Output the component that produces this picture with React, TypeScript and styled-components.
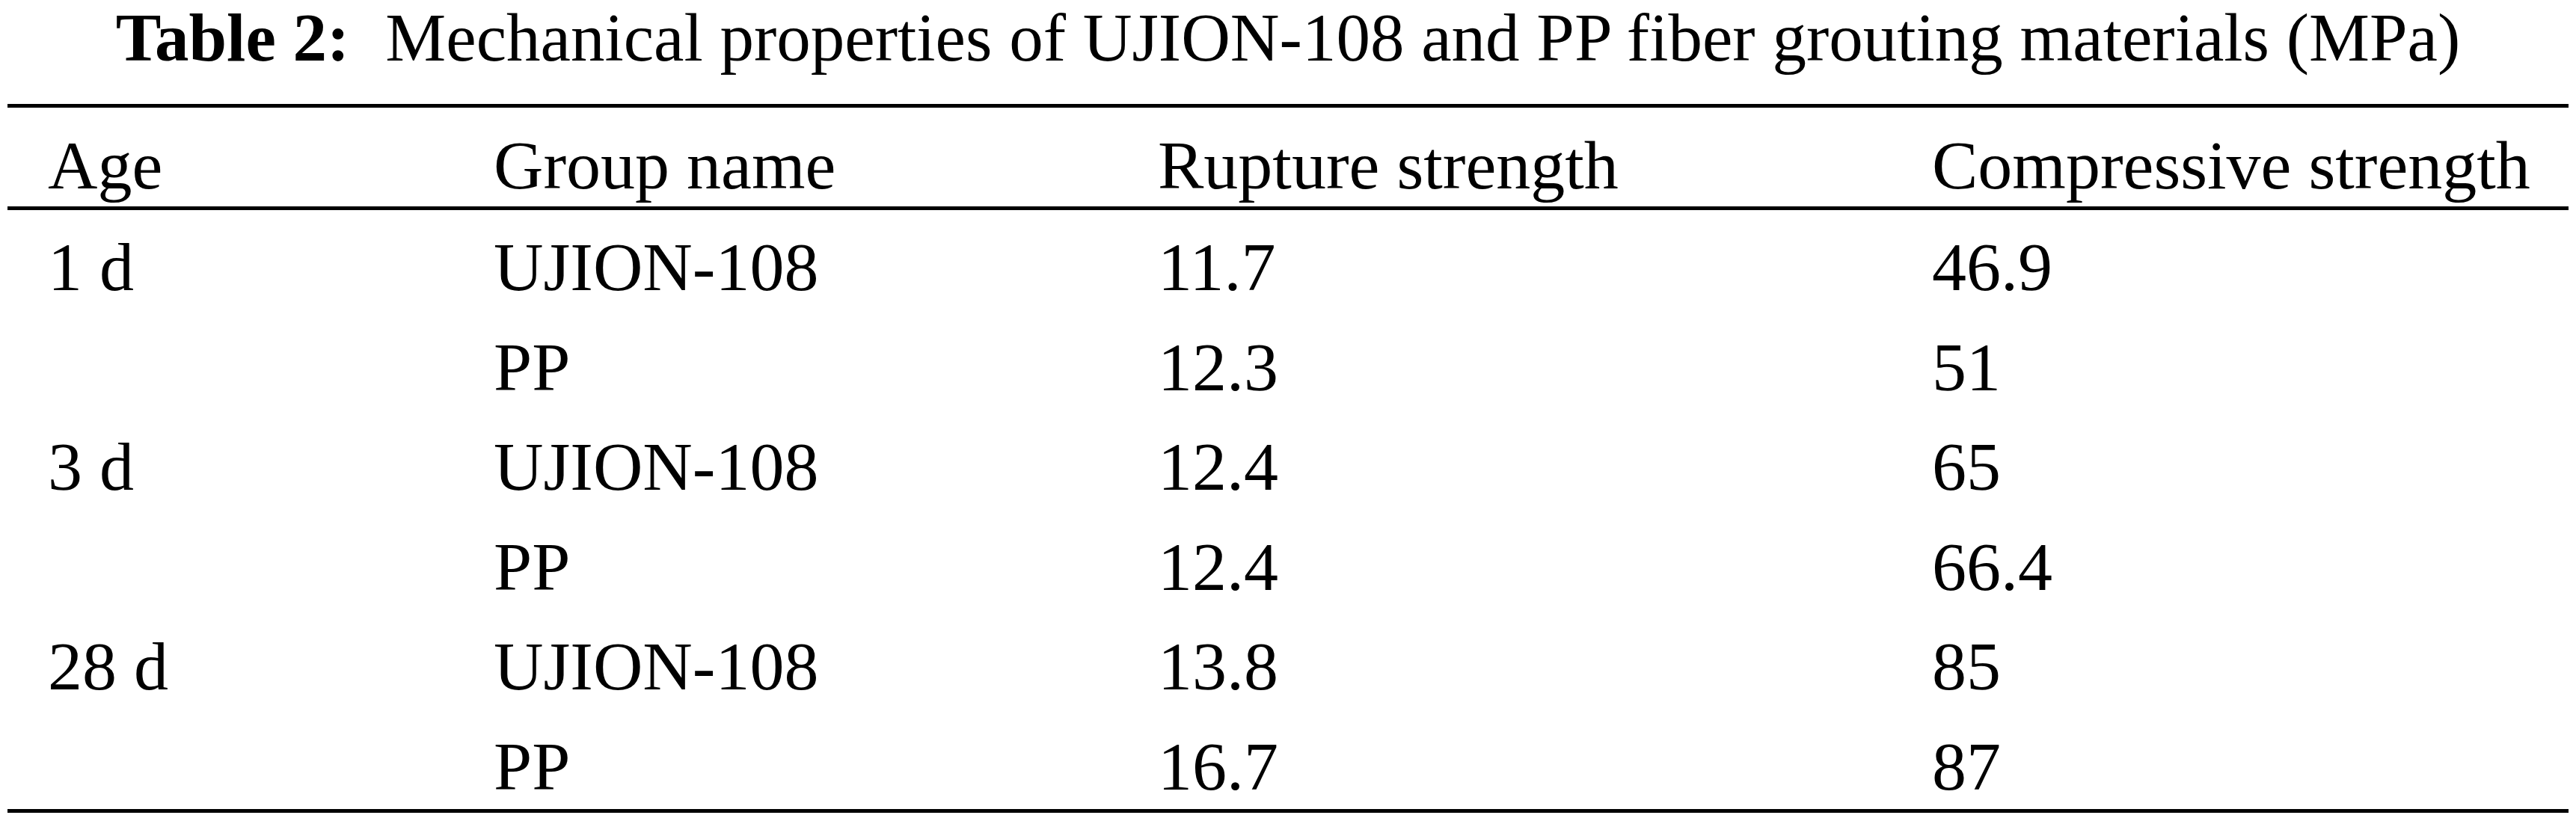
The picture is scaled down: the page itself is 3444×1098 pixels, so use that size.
import React from 'react';
import styled, { createGlobalStyle } from 'styled-components';

const GlobalStyle = createGlobalStyle`
	html, body {
		margin: 0;
		padding: 0;
		background: #ffffff;
	}

	body {
		font-family: 'Liberation Serif', 'Times New Roman', serif;
		color: #000000;
	}
`;

const Page = styled.div`
	width: 3444px;
	padding: 0 10px;
	box-sizing: border-box;
`;

const Caption = styled.div`
	font-size: 91px;
	line-height: 102px;
	text-align: center;
	white-space: nowrap;
	margin-bottom: 37px;
`;

const CaptionLabel = styled.span`
	font-weight: 700;
	padding-right: 48px;
`;

const Table = styled.div`
	display: flex;
	flex-direction: column;
	border-top: 5px solid #000;
	border-bottom: 5px solid #000;
`;

const Row = styled.div<{ $head?: boolean }>`
	display: grid;
	grid-template-columns: 650px 888px 1035px 1fr;
	box-sizing: border-box;
	height: ${(p) => (p.$head ? '137px' : '133.5px')};
	padding-top: ${(p) => (p.$head ? '31px' : '30px')};
	border-bottom: ${(p) => (p.$head ? '5px solid #000' : 'none')};
	font-size: 92px;
	line-height: 92px;
	white-space: nowrap;
`;

const Cell = styled.div<{ $first?: boolean }>`
	padding-left: ${(p) => (p.$first ? '54px' : '0')};
`;

const head = ['Age', 'Group name', 'Rupture strength', 'Compressive strength'];

const rows = [
	['1 d', 'UJION-108', '11.7', '46.9'],
	['', 'PP', '12.3', '51'],
	['3 d', 'UJION-108', '12.4', '65'],
	['', 'PP', '12.4', '66.4'],
	['28 d', 'UJION-108', '13.8', '85'],
	['', 'PP', '16.7', '87'],
];

const App = () => {
	return (
		<>
			<GlobalStyle />
			<Page>
				<Caption>
					<CaptionLabel>Table 2:</CaptionLabel>
					Mechanical properties of UJION-108 and PP fiber grouting materials (MPa)
				</Caption>
				<Table>
					<Row $head>
						{head.map((h, i) => (
							<Cell key={h} $first={i === 0}>
								{h}
							</Cell>
						))}
					</Row>
					{rows.map((r, ri) => (
						<Row key={ri}>
							{r.map((c, ci) => (
								<Cell key={ci} $first={ci === 0}>
									{c}
								</Cell>
							))}
						</Row>
					))}
				</Table>
			</Page>
		</>
	);
};

export default App;
